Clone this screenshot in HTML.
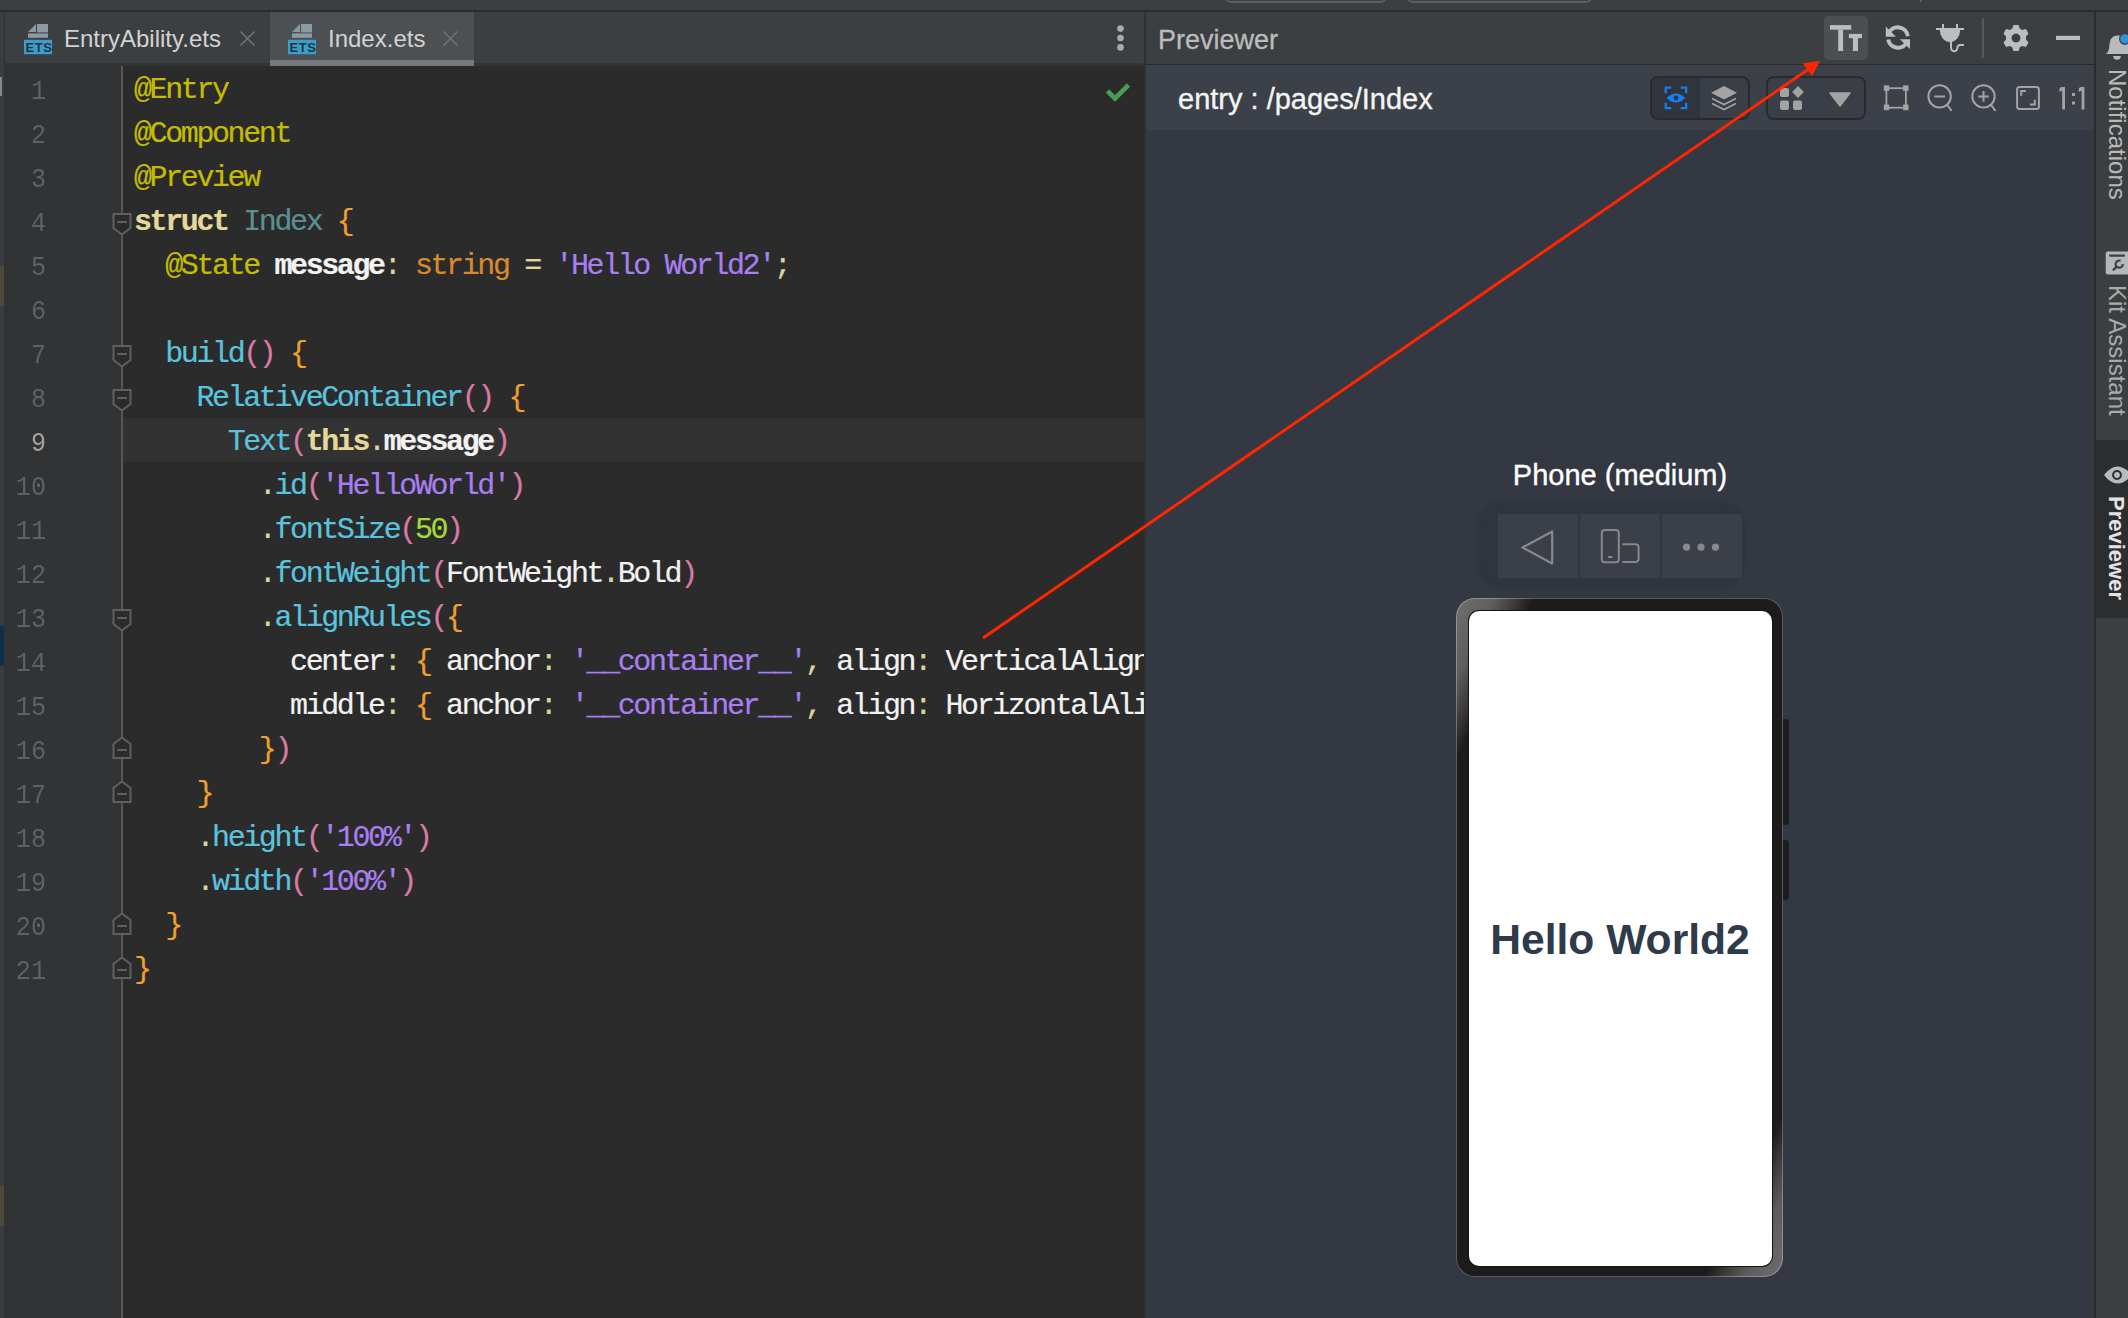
<!DOCTYPE html>
<html><head><meta charset="utf-8">
<style>
html,body{margin:0;padding:0;}
body{width:2128px;height:1318px;overflow:hidden;position:relative;background:#3c3f41;font-family:"Liberation Sans",sans-serif;}
.abs{position:absolute;}
#topstrip{left:0;top:0;width:2128px;height:10px;background:#3c3f41;}
#topline{left:0;top:10px;width:2128px;height:2px;background:#2b2b2b;}
#tabbar{z-index:2;left:5px;top:12px;width:1138px;height:51px;background:#3c3f41;}
#leftstrip{left:0;top:12px;width:4px;height:1306px;background:#3a3d40;}
#leftborder{left:4px;top:12px;width:1px;height:1306px;background:#2e3032;}
#gutter{left:5px;top:66px;width:116px;height:1252px;background:#313335;}
#gutline{left:121px;top:66px;width:2px;height:1252px;background:#555759;}
#editor{left:123px;top:66px;width:1021px;height:1252px;background:#2b2b2b;overflow:hidden;}
#curline{left:0;top:352px;width:1021px;height:44px;background:#323232;}
#vdiv{left:1144px;top:12px;width:2px;height:1306px;background:#303030;}
#phead{left:1146px;top:12px;width:948px;height:52px;background:#3c3f41;}
#pheadline{left:1146px;top:64px;width:948px;height:1px;background:#2b2b2b;}
#ptool{z-index:1;left:1146px;top:65px;width:948px;height:65px;background:#3c4048;}
#pcanvas{left:1146px;top:129px;width:948px;height:1189px;background:#333842;}
#rborder{left:2094px;top:12px;width:2px;height:1306px;background:#2b2b2b;}
#rside{left:2096px;top:12px;width:32px;height:1306px;background:#3c3f41;}
.tabt{font-size:24px;color:#d2d2d2;line-height:54px;white-space:nowrap;}
.vt{width:32px;writing-mode:vertical-rl;line-height:32px;white-space:nowrap;}
.code{position:absolute;left:0;font-family:"Liberation Mono",monospace;font-size:30px;letter-spacing:-2.4px;white-space:pre;height:44px;line-height:44px;color:#e8e8e8;-webkit-text-stroke:0.2px currentColor;}
.ln{position:absolute;right:0;width:100px;text-align:right;font-family:"Liberation Mono",monospace;font-size:27px;letter-spacing:0px;white-space:pre;line-height:44px;height:44px;color:#5e6266;transform:scaleX(0.93);transform-origin:100% 50%;}
.an{color:#c5bd00}
.kw{color:#e4d99a;font-weight:bold}
.ty{color:#5a9190}
.br{color:#f0a02e}
.id{color:#f2f2f2}
.pu{color:#ddd59a}
.k2{color:#d98a30}
.st{color:#a87ef0}
.fn{color:#5ac3de}
.pa{color:#d97aa5}
.nu{color:#a6d83a}
</style></head><body>
<div class="abs" id="topstrip">
<div class="abs" style="left:1225px;top:-12px;width:162px;height:15px;box-sizing:border-box;border:2px solid #5b5e61;border-radius:6px"></div>
<div class="abs" style="left:1407px;top:-12px;width:185px;height:15px;box-sizing:border-box;border:2px solid #5b5e61;border-radius:6px"></div>
<div class="abs" style="left:1920px;top:0;width:1.5px;height:2px;background:#5b5e61"></div>
</div>
<div class="abs" id="topline"></div>
<div class="abs" id="leftstrip"></div>
<div class="abs" id="leftborder"></div>
<div class="abs" style="left:0;top:77px;width:2px;height:19px;background:#878889"></div>
<div class="abs" style="left:0;top:266px;width:4px;height:40px;background:#4f4b3c"></div>
<div class="abs" style="left:0;top:626px;width:4px;height:40px;background:#0f2f4d"></div>
<div class="abs" style="left:0;top:1186px;width:4px;height:40px;background:#4f4b3c"></div>
<div class="abs" id="tabbar">
<svg class="abs" style="left:19px;top:12px" width="29" height="31" viewBox="0 0 29 31">
 <polygon points="4,8 12,0 12,8" fill="#8d99a1"/>
 <rect x="13" y="0" width="11" height="8.4" fill="#8d99a1"/>
 <rect x="4" y="9.4" width="20" height="4.4" fill="#8d99a1"/>
 <rect x="0" y="15.8" width="28" height="14.4" fill="#3c9dcc"/>
 <text x="15" y="27.8" font-family="Liberation Sans" font-size="13" font-weight="bold" fill="#24323c" text-anchor="middle" letter-spacing="0.6">ETS</text>
</svg>
<div class="abs tabt" style="left:59px;top:0;">EntryAbility.ets</div>
<svg class="abs" style="left:234px;top:18px" width="17" height="17"><path d="M1.5,1.5 L15.5,15.5 M15.5,1.5 L1.5,15.5" stroke="#6f7275" stroke-width="1.7"/></svg>
<div class="abs" style="left:265px;top:0;width:204px;height:54px;background:#4c5053"></div>
<div class="abs" style="left:265px;top:48px;width:204px;height:6px;background:#737980"></div>
<svg class="abs" style="left:283px;top:12px" width="29" height="31" viewBox="0 0 29 31">
 <polygon points="4,8 12,0 12,8" fill="#8d99a1"/>
 <rect x="13" y="0" width="11" height="8.4" fill="#8d99a1"/>
 <rect x="4" y="9.4" width="20" height="4.4" fill="#8d99a1"/>
 <rect x="0" y="15.8" width="28" height="14.4" fill="#3c9dcc"/>
 <text x="15" y="27.8" font-family="Liberation Sans" font-size="13" font-weight="bold" fill="#24323c" text-anchor="middle" letter-spacing="0.6">ETS</text>
</svg>
<div class="abs tabt" style="left:323px;top:0;">Index.ets</div>
<svg class="abs" style="left:437px;top:18px" width="17" height="17"><path d="M1.5,1.5 L15.5,15.5 M15.5,1.5 L1.5,15.5" stroke="#6f7275" stroke-width="1.7"/></svg>
<svg class="abs" style="left:1108px;top:12px" width="14" height="30"><circle cx="7.5" cy="4.6" r="3.3" fill="#a9abad"/><circle cx="7.5" cy="14" r="3.3" fill="#a9abad"/><circle cx="7.5" cy="23.4" r="3.3" fill="#a9abad"/></svg>
</div>
<div class="abs" style="left:5px;top:63px;width:1138px;height:3px;background:#323334"></div>
<div class="abs" id="gutter">
<div class="abs" id="numwrap" style="left:2px;top:4px;width:39px;height:1000px;">
<div class="ln" style="top:0px">1</div>
<div class="ln" style="top:44px">2</div>
<div class="ln" style="top:88px">3</div>
<div class="ln" style="top:132px">4</div>
<div class="ln" style="top:176px">5</div>
<div class="ln" style="top:220px">6</div>
<div class="ln" style="top:264px">7</div>
<div class="ln" style="top:308px">8</div>
<div class="ln" style="top:352px;color:#a4a3a3">9</div>
<div class="ln" style="top:396px">10</div>
<div class="ln" style="top:440px">11</div>
<div class="ln" style="top:484px">12</div>
<div class="ln" style="top:528px">13</div>
<div class="ln" style="top:572px">14</div>
<div class="ln" style="top:616px">15</div>
<div class="ln" style="top:660px">16</div>
<div class="ln" style="top:704px">17</div>
<div class="ln" style="top:748px">18</div>
<div class="ln" style="top:792px">19</div>
<div class="ln" style="top:836px">20</div>
<div class="ln" style="top:880px">21</div>
</div>
</div>
<div class="abs" id="gutline"></div>
<div class="abs" id="editor">
  <div class="abs" id="curline"></div>
<div class="abs" id="codewrap" style="left:11px;top:2px;width:1100px;height:1000px;">
<div class="code" style="top:0px"><span class="an">@Entry</span></div>
<div class="code" style="top:44px"><span class="an">@Component</span></div>
<div class="code" style="top:88px"><span class="an">@Preview</span></div>
<div class="code" style="top:132px"><span class="kw">struct</span> <span class="ty">Index</span> <span class="br">{</span></div>
<div class="code" style="top:176px">  <span class="an">@State</span> <span class="id" style="font-weight:bold">message</span><span class="pu">:</span> <span class="k2">string</span> <span class="pu">=</span> <span class="st">'Hello World2'</span><span class="pu">;</span></div>
<div class="code" style="top:220px"></div>
<div class="code" style="top:264px">  <span class="fn">build</span><span class="pa">()</span> <span class="br">{</span></div>
<div class="code" style="top:308px">    <span class="fn">RelativeContainer</span><span class="pa">()</span> <span class="br">{</span></div>
<div class="code" style="top:352px">      <span class="fn">Text</span><span class="pa">(</span><span class="kw">this</span><span class="pu">.</span><span class="id" style="font-weight:bold">message</span><span class="pa">)</span></div>
<div class="code" style="top:396px">        <span class="pu">.</span><span class="fn">id</span><span class="pa">(</span><span class="st">'HelloWorld'</span><span class="pa">)</span></div>
<div class="code" style="top:440px">        <span class="pu">.</span><span class="fn">fontSize</span><span class="pa">(</span><span class="nu">50</span><span class="pa">)</span></div>
<div class="code" style="top:484px">        <span class="pu">.</span><span class="fn">fontWeight</span><span class="pa">(</span><span class="id">FontWeight</span><span class="pu">.</span><span class="id">Bold</span><span class="pa">)</span></div>
<div class="code" style="top:528px">        <span class="pu">.</span><span class="fn">alignRules</span><span class="pa">(</span><span class="br">{</span></div>
<div class="code" style="top:572px">          <span class="id">center</span><span class="pu">:</span> <span class="br">{</span> <span class="id">anchor</span><span class="pu">:</span> <span class="st">'__container__'</span><span class="pu">,</span> <span class="id">align</span><span class="pu">:</span> <span class="id">VerticalAlign.Center</span> <span class="br">}</span><span class="pu">,</span></div>
<div class="code" style="top:616px">          <span class="id">middle</span><span class="pu">:</span> <span class="br">{</span> <span class="id">anchor</span><span class="pu">:</span> <span class="st">'__container__'</span><span class="pu">,</span> <span class="id">align</span><span class="pu">:</span> <span class="id">HorizontalAlign.Center</span> <span class="br">}</span></div>
<div class="code" style="top:660px">        <span class="br">}</span><span class="pa">)</span></div>
<div class="code" style="top:704px">    <span class="br">}</span></div>
<div class="code" style="top:748px">    <span class="pu">.</span><span class="fn">height</span><span class="pa">(</span><span class="st">'100%'</span><span class="pa">)</span></div>
<div class="code" style="top:792px">    <span class="pu">.</span><span class="fn">width</span><span class="pa">(</span><span class="st">'100%'</span><span class="pa">)</span></div>
<div class="code" style="top:836px">  <span class="br">}</span></div>
<div class="code" style="top:880px"><span class="br">}</span></div>
</div>
</div>
<svg class="abs" style="left:0;top:0" width="1144" height="1318">
<path d="M113.5,214.0 L130.5,214.0 L130.5,228.0 L122,234.5 L113.5,228.0 Z" fill="#2b2b2b" stroke="#5f5f5f" stroke-width="2"/><rect x="117" y="221.0" width="10" height="2" fill="#5f5f5f"/>
<path d="M113.5,346.0 L130.5,346.0 L130.5,360.0 L122,366.5 L113.5,360.0 Z" fill="#2b2b2b" stroke="#5f5f5f" stroke-width="2"/><rect x="117" y="353.0" width="10" height="2" fill="#5f5f5f"/>
<path d="M113.5,390.0 L130.5,390.0 L130.5,404.0 L122,410.5 L113.5,404.0 Z" fill="#2b2b2b" stroke="#5f5f5f" stroke-width="2"/><rect x="117" y="397.0" width="10" height="2" fill="#5f5f5f"/>
<path d="M113.5,610.0 L130.5,610.0 L130.5,624.0 L122,630.5 L113.5,624.0 Z" fill="#2b2b2b" stroke="#5f5f5f" stroke-width="2"/><rect x="117" y="617.0" width="10" height="2" fill="#5f5f5f"/>
<path d="M113.5,758.0 L130.5,758.0 L130.5,744.0 L122,737.5 L113.5,744.0 Z" fill="#2b2b2b" stroke="#5f5f5f" stroke-width="2"/><rect x="117" y="749.0" width="10" height="2" fill="#5f5f5f"/>
<path d="M113.5,802.0 L130.5,802.0 L130.5,788.0 L122,781.5 L113.5,788.0 Z" fill="#2b2b2b" stroke="#5f5f5f" stroke-width="2"/><rect x="117" y="793.0" width="10" height="2" fill="#5f5f5f"/>
<path d="M113.5,934.0 L130.5,934.0 L130.5,920.0 L122,913.5 L113.5,920.0 Z" fill="#2b2b2b" stroke="#5f5f5f" stroke-width="2"/><rect x="117" y="925.0" width="10" height="2" fill="#5f5f5f"/>
<path d="M113.5,978.0 L130.5,978.0 L130.5,964.0 L122,957.5 L113.5,964.0 Z" fill="#2b2b2b" stroke="#5f5f5f" stroke-width="2"/><rect x="117" y="969.0" width="10" height="2" fill="#5f5f5f"/>
<path d="M1107.5,91 L1115,98.5 L1128.5,85" fill="none" stroke="#499c54" stroke-width="4.6"/>
</svg>
<div class="abs" id="vdiv"></div>
<div class="abs" id="phead">
<div class="abs" style="left:12px;top:2px;font-size:27px;line-height:52px;color:#bbbcbd;white-space:nowrap;-webkit-text-stroke:0.3px #bbbcbd">Previewer</div>
<div class="abs" style="left:678px;top:4px;width:44px;height:44px;border-radius:5px;background:#4b4f52"></div>
<svg class="abs" style="left:0;top:0" width="948" height="52" viewBox="1146 12 948 52">
 <g fill="#bcbdbe">
  <rect x="1830" y="25.1" width="21.2" height="4.6"/><rect x="1838.2" y="29.5" width="4.9" height="21.5"/>
  <rect x="1848.9" y="33.9" width="13.1" height="4.2"/><rect x="1852.9" y="38" width="5.1" height="13"/>
 </g>
 <g fill="none" stroke="#bcbdbe" stroke-width="4">
  <path d="M1888.6,33.5 A10,10 0 0 1 1907.8,36.3"/>
  <path d="M1888.2,39.5 A10,10 0 0 0 1906.5,43"/>
 </g>
 <g fill="#bcbdbe">
  <polygon points="1885.8,26.6 1885.8,36.7 1895.9,36.7"/>
  <polygon points="1910,39.3 1910,49.1 1899.9,39.3"/>
 </g>
 <g fill="#bcbdbe">
  <rect x="1936" y="28" width="28" height="2"/>
  <rect x="1942" y="24" width="2" height="4.5"/><rect x="1956" y="24" width="2" height="4.5"/>
  <path d="M1939.8,30 L1960.2,30 A10.2,12 0 0 1 1939.8,30 Z"/>
 </g>
 <path d="M1951,41 L1951,48 A3.2,3.2 0 0 0 1957.4,48 L1957.4,47.5 A3,3 0 0 1 1960.4,45 L1964,45" fill="none" stroke="#bcbdbe" stroke-width="2"/>
 <rect x="1982" y="18" width="2" height="40" fill="#56595b"/>
 <g transform="translate(2016,38)">
  <path fill="#bcbdbe" fill-rule="evenodd" d="M-2.6,-13 L2.6,-13 L3.6,-9.5 L6.2,-8 L9.9,-8.9 L12.5,-4.4 L10,-1.5 L10,1.5 L12.5,4.4 L9.9,8.9 L6.2,8 L3.6,9.5 L2.6,13 L-2.6,13 L-3.6,9.5 L-6.2,8 L-9.9,8.9 L-12.5,4.4 L-10,1.5 L-10,-1.5 L-12.5,-4.4 L-9.9,-8.9 L-6.2,-8 L-3.6,-9.5 Z M0,-4.4 A4.4,4.4 0 1 0 0.01,-4.4 Z"/>
 </g>
 <rect x="2056" y="35.8" width="24" height="4.2" fill="#bcbdbe"/>
</svg>
</div>
<div class="abs" id="pheadline"></div>
<div class="abs" id="ptool">
<div class="abs" style="left:32px;top:2px;font-size:29px;line-height:64px;color:#f4f4f4;white-space:nowrap;-webkit-text-stroke:0.35px #f4f4f4">entry : /pages/Index</div>
<div class="abs" style="left:504px;top:11px;width:100px;height:44px;box-sizing:border-box;border:2px solid #282a2e;border-radius:8px;background:#3a3e46;overflow:hidden"><div style="width:48px;height:40px;background:#30343b"></div></div>
<div class="abs" style="left:620px;top:11px;width:100px;height:44px;box-sizing:border-box;border:2px solid #282a2e;border-radius:8px;background:#3a3e46"></div>
<svg class="abs" style="left:0;top:0" width="948" height="64" viewBox="1146 65 948 64">
 <g fill="none" stroke="#1a7df6" stroke-width="2.2">
  <path d="M1665.7,93.2 L1665.7,87.7 L1671.2,87.7 M1680.7,87.7 L1686.2,87.7 L1686.2,93.2 M1686.2,102.7 L1686.2,108.1 L1680.7,108.1 M1671.2,108.1 L1665.7,108.1 L1665.7,102.7"/>
 </g>
 <path fill="#1a7df6" d="M1666.7,98 Q1676,88.8 1685.2,98 Q1676,107.2 1666.7,98 Z"/>
 <circle cx="1676" cy="98" r="2.4" fill="#30343b"/>
 <g fill="#a3a3a3">
  <polygon points="1724,86 1737,92.7 1724,99.4 1711,92.7"/>
 </g>
 <g fill="none" stroke="#a3a3a3" stroke-width="1.6">
  <polyline points="1712,98.5 1724,104.5 1736,98.5"/>
  <polyline points="1712,103.5 1724,109.5 1736,103.5"/>
 </g>
 <g fill="#a3a3a3">
  <rect x="1780" y="88" width="9" height="9" rx="2"/>
  <rect x="1780" y="100.5" width="9" height="9.5" rx="2"/>
  <rect x="1793" y="100.5" width="9" height="9.5" rx="2"/>
  <polygon points="1798,86 1803.8,92 1798,98 1792.2,92"/>
  <path d="M1830,93 L1850,93 L1840,106 Z" stroke="#a3a3a3" stroke-width="1.5" stroke-linejoin="round"/>
 </g>
 <g fill="none" stroke="#a3a3a3" stroke-width="1.8">
  <rect x="1886.4" y="88.2" width="19.5" height="19.5"/>
 </g>
 <g fill="#a3a3a3">
  <rect x="1883.8" y="85.3" width="5.4" height="5.6"/><rect x="1903.1" y="85.3" width="5.4" height="5.6"/>
  <rect x="1883.8" y="104.6" width="5.4" height="5.6"/><rect x="1903.1" y="104.6" width="5.4" height="5.6"/>
 </g>
 <g fill="none" stroke="#a3a3a3" stroke-width="2">
  <circle cx="1939.6" cy="96.4" r="11.2"/><path d="M1947.2,105 L1951.6,110.8 M1934.4,96.4 L1945,96.4"/>
  <circle cx="1983.5" cy="96.4" r="11.2"/><path d="M1991.1,105 L1995.5,110.8 M1978.2,96.4 L1988.8,96.4 M1983.5,91.1 L1983.5,101.7"/>
  <rect x="2017.1" y="86.9" width="21.8" height="22.2" rx="2.5"/>
  <path d="M2021.2,95.7 L2021.2,91 L2026,91 M2034.8,99.8 L2034.8,104.5 L2030,104.5"/>
 </g>
 <g fill="#a3a3a3">
  <path d="M2061,86.9 L2065,86.9 L2065,109.6 L2062.2,109.6 L2062.2,90.5 L2059.5,92 L2059.5,88.5 Z"/>
  <rect x="2072" y="93" width="3" height="3"/><rect x="2072" y="101.5" width="3" height="3"/>
  <path d="M2080.2,86.9 L2084.4,86.9 L2084.4,109.6 L2081.6,109.6 L2081.6,90.5 L2078.7,92 L2078.7,88.5 Z"/>
 </g>
</svg>
</div>
<div class="abs" id="pcanvas">
<div class="abs" style="left:0;top:330px;width:948px;text-align:center;font-size:29px;line-height:32px;color:#ffffff;white-space:nowrap;-webkit-text-stroke:0.35px #ffffff">Phone (medium)</div>
<div class="abs" style="left:331px;top:372px;width:268px;height:89px;border-radius:26px;background:#30343c;filter:blur(1.5px)"></div>
<div class="abs" style="left:352px;top:385px;width:244px;height:64px;background:#3b3f48"></div>
<div class="abs" style="left:432px;top:385px;width:1.5px;height:64px;background:#30343b"></div>
<div class="abs" style="left:514px;top:385px;width:1.5px;height:64px;background:#30343b"></div>
<svg class="abs" style="left:0;top:0" width="948" height="700" viewBox="1146 129 948 700">
 <path d="M1552.2,531.5 L1552.2,563.5 L1522.5,547.5 Z" fill="none" stroke="#86888c" stroke-width="2.2" stroke-linejoin="round"/>
 <rect x="1601.8" y="530" width="17" height="32.3" rx="3" fill="none" stroke="#86888c" stroke-width="2"/>
 <rect x="1608" y="556" width="4.5" height="2" fill="#86888c"/>
 <path d="M1622.3,544.3 L1635.5,544.3 Q1638.6,544.3 1638.6,547.4 L1638.6,558.8 Q1638.6,561.9 1635.5,561.9 L1622.3,561.9" fill="none" stroke="#86888c" stroke-width="2"/>
 <circle cx="1686.5" cy="547.2" r="3.6" fill="#86888c"/>
 <circle cx="1701" cy="547.2" r="3.6" fill="#86888c"/>
 <circle cx="1715.5" cy="547.2" r="3.6" fill="#86888c"/>
</svg>
<div class="abs" style="left:637px;top:590px;width:6px;height:106px;border-radius:0 3px 3px 0;background:#1d1d1d"></div>
<div class="abs" style="left:637px;top:711px;width:6px;height:60px;border-radius:0 3px 3px 0;background:#1d1d1d"></div>
<div class="abs" style="left:310px;top:469px;width:327px;height:679px;border-radius:19px;box-sizing:border-box;background:linear-gradient(to bottom right,#707070 0%,#5e5e5e 6%,#3c3837 9.5%,#1c1c1c 12%,#1c1c1c 88%,#3a3736 90.5%,#5c5c5c 94%,#6e6e6e 100%);box-shadow:inset 0 0 0 1px rgba(255,255,255,0.28)"></div>
<div class="abs" style="left:322.5px;top:481.5px;width:303px;height:655px;border-radius:10px;background:#ffffff;box-shadow:0 0 0 1px #151515"></div>
<div class="abs" style="left:322px;top:786px;width:304px;text-align:center;font-weight:bold;font-size:42.6px;line-height:48px;color:#2f3a4a;white-space:nowrap">Hello World2</div>
</div>
<div class="abs" id="rborder"></div>
<div class="abs" id="rside">
<svg class="abs" style="left:0;top:0" width="32" height="620" viewBox="2096 12 32 620">
 <path d="M2106,54 L2128,54 L2128,40 Q2128,35.5 2117,35.5 Q2110,36 2109.5,44 L2109,49 Q2108.5,51.5 2106,54 Z" fill="#b9babb"/>
 <path d="M2113.2,56 L2120.8,56 A3.8,3.8 0 0 1 2113.2,56 Z" fill="#b9babb"/>
 <circle cx="2125" cy="38.9" r="6" fill="#3c3f41"/>
 <circle cx="2125" cy="38.9" r="4.7" fill="#2f93d3"/>
 <rect x="2105.7" y="251.5" width="24" height="23" rx="2" fill="#b5b6b7"/>
 <rect x="2109" y="254.6" width="16" height="2.2" rx="1" fill="#3c3f41"/>
 <path d="M2120.6,260.8 A3.6,3.6 0 1 0 2122.8,264" fill="none" stroke="#3c3f41" stroke-width="2.2"/>
 <path d="M2116.3,267 L2113.6,269.7" stroke="#3c3f41" stroke-width="2.4" stroke-linecap="round"/>
 <rect x="2095" y="440" width="33" height="178" fill="#2b2d2f"/>
 <path d="M2104,475 Q2117,458 2132,475 Q2117,492 2104,475 Z" fill="#b9babb"/>
 <circle cx="2117" cy="475" r="3.9" fill="none" stroke="#2b2d2f" stroke-width="2"/>
 </svg>
<div class="abs vt" style="left:5px;top:57px;font-size:24px;color:#b8b9ba">Notifications</div>
<div class="abs vt" style="left:5px;top:273px;font-size:24px;color:#a9aaab">Kit Assistant</div>
<div class="abs vt" style="left:4px;top:484px;font-size:22px;font-weight:bold;color:#e2e3e4">Previewer</div>
</div>
<svg class="abs" style="left:0;top:0;z-index:10;pointer-events:none" width="2128" height="1318">
 <line x1="983" y1="638" x2="1808" y2="69.5" stroke="#ff2600" stroke-width="3"/>
 <polygon points="1820,61 1802.8,63.3 1812,76" fill="#ff2600"/>
</svg>
</body></html>
